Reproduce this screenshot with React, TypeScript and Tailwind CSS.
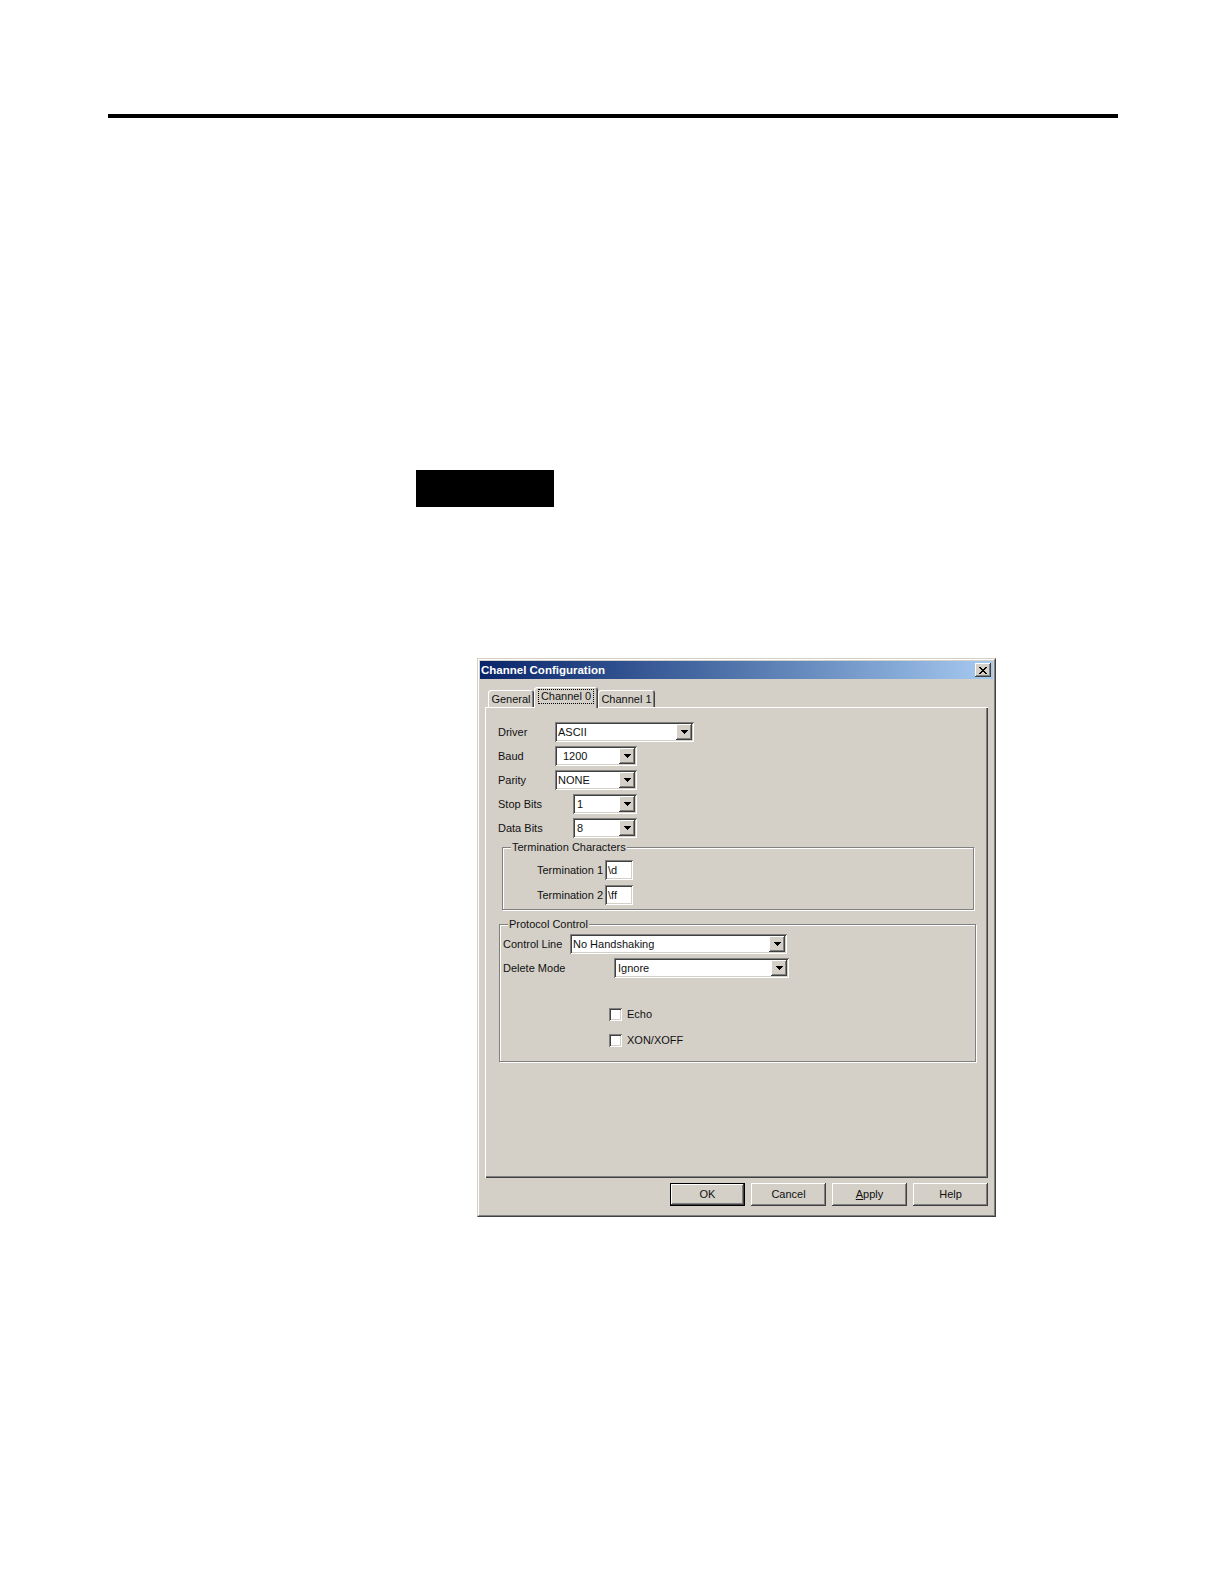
import React from "react";

const raised =
  "shadow-[inset_-1px_-1px_0_#404040,inset_1px_1px_0_#ffffff,inset_-2px_-2px_0_#808080,inset_2px_2px_0_#d4d0c8]";
const sunken =
  "shadow-[inset_1px_1px_0_#808080,inset_-1px_-1px_0_#ffffff,inset_2px_2px_0_#404040,inset_-2px_-2px_0_#d4d0c8]";
const etched = "border border-[#808080] shadow-[inset_1px_1px_0_#ffffff,1px_1px_0_#ffffff]";

function Arrow() {
  return (
    <svg width="7" height="4" viewBox="0 0 7 4" shapeRendering="crispEdges">
      <path d="M0 0h7v1h-1v1h-1v1h-1v1h-1v-1h-1v-1h-1v-1h-1z" fill="#000" />
    </svg>
  );
}

function Combo({ className, text, textClass = "pl-[1px]" }: { className: string; text: string; textClass?: string }) {
  return (
    <div className={`${className} h-[20px] bg-white ${sunken} p-[2px] flex`}>
      <div className={`flex-1 leading-[16px] ${textClass}`}>{text}</div>
      <div className={`w-[16px] h-[16px] bg-[#d4d0c8] ${raised} flex items-center justify-center`}>
        <Arrow />
      </div>
    </div>
  );
}

function Field({ text }: { text: string }) {
  return (
    <div className={`w-[28px] h-[20px] bg-white ${sunken} px-[3px] leading-[20px]`}>{text}</div>
  );
}

function Check({ label }: { label: string }) {
  return (
    <div className="flex items-center h-[13px] ml-[109px]">
      <div className={`w-[13px] h-[13px] bg-white ${sunken}`} />
      <div className="ml-[5px] leading-[13px]">{label}</div>
    </div>
  );
}

function Button({ children, def = false }: { children: React.ReactNode; def?: boolean }) {
  return (
    <div
      className={`w-[75px] h-[23px] bg-[#d4d0c8] flex items-center justify-center ${
        def ? "border border-black" : ""
      }`}
    >
      <div className={`w-full h-full ${raised} flex items-center justify-center leading-[13px]`}>{children}</div>
    </div>
  );
}

export default function App() {
  return (
    <div className="w-[1224px] min-h-[1584px] bg-white pt-[114px] font-['Liberation_Sans',Arial,sans-serif] text-[11px] text-[#111] overflow-hidden">
      <div className="ml-[108px] w-[1010px] h-[4px] bg-black" />
      <div className="ml-[416px] mt-[352px] w-[138px] h-[37px] bg-black" />

      {/* Dialog */}
      <div className="ml-[477px] mt-[151px] w-[519px] h-[559px] bg-[#d4d0c8] border border-t-[#d4d0c8] border-l-[#d4d0c8] border-r-[#404040] border-b-[#404040]">
        <div className="w-full h-full border border-t-white border-l-white border-r-[#808080] border-b-[#808080] p-[1px] flex flex-col">
          {/* Title bar */}
          <div className="h-[18px] bg-linear-to-r from-[#0a246a] to-[#a6caf0] flex items-center justify-between pl-[1px] pr-[2px]">
            <div className="text-white font-bold text-[11.5px] leading-[14px]">Channel Configuration</div>
            <div className={`w-[16px] h-[14px] bg-[#d4d0c8] ${raised} flex items-center justify-center`}>
              <svg width="8" height="7" viewBox="0 0 8 7" shapeRendering="crispEdges">
                <path
                  d="M0 0h2v1h1v1h2v-1h1v-1h2v1h-1v1h-1v1h-1v1h1v1h1v1h1v1h-2v-1h-1v-1h-2v1h-1v1h-2v-1h1v-1h1v-1h1v-1h-1v-1h-1v-1h-1z"
                  fill="#000"
                />
              </svg>
            </div>
          </div>

          {/* Body */}
          <div className="pl-[5px] pr-[5px] pt-[8px]">
            {/* Tabs */}
            <div className="flex items-end h-[20px] pl-[3px]">
              <div className="w-[46px] h-[17px] rounded-t-[3px] shadow-[inset_1px_1px_0_#ffffff,inset_-1px_0_0_#404040,inset_-2px_0_0_#808080] flex items-center justify-center leading-[13px] pt-[1px]">
                General
              </div>
              <div className="relative z-10 w-[64px] h-[21px] mb-[-1px] bg-[#d4d0c8] rounded-t-[3px] shadow-[inset_1px_1px_0_#ffffff,inset_-1px_0_0_#404040,inset_-2px_0_0_#808080] flex items-start justify-center pt-[2px]">
                <span className="border border-dotted border-black px-[2px] leading-[13px]">Channel 0</span>
              </div>
              <div className="w-[57px] h-[17px] rounded-t-[3px] shadow-[inset_1px_1px_0_#ffffff,inset_-1px_0_0_#404040,inset_-2px_0_0_#808080] flex items-center justify-center leading-[13px] pt-[1px]">
                Channel 1
              </div>
            </div>

            {/* Panel */}
            <div className="h-[471px] shadow-[inset_1px_1px_0_#ffffff,inset_-1px_-1px_0_#404040,inset_-2px_-2px_0_#808080] pt-[15px]">
              <div className="pl-[13px] flex flex-col gap-[4px]">
                <div className="flex items-center h-[20px]">
                  <div className="w-[57px]">Driver</div>
                  <Combo className="w-[139px]" text="ASCII" />
                </div>
                <div className="flex items-center h-[20px]">
                  <div className="w-[57px]">Baud</div>
                  <Combo className="w-[82px]" text="1200" textClass="pl-[6px]" />
                </div>
                <div className="flex items-center h-[20px]">
                  <div className="w-[57px]">Parity</div>
                  <Combo className="w-[82px]" text="NONE" />
                </div>
                <div className="flex items-center h-[20px]">
                  <div className="w-[75px]">Stop Bits</div>
                  <Combo className="w-[64px]" text="1" textClass="pl-[2px]" />
                </div>
                <div className="flex items-center h-[20px]">
                  <div className="w-[75px]">Data Bits</div>
                  <Combo className="w-[64px]" text="8" textClass="pl-[2px]" />
                </div>
              </div>

              {/* Termination Characters */}
              <div className={`ml-[17px] mt-[9px] w-[472px] ${etched} pb-[4px]`}>
                <div className="-mt-[7px] ml-[8px] px-[1px] w-fit bg-[#d4d0c8] leading-[13px]">Termination Characters</div>
                <div className="mt-[6px] ml-[34px] flex flex-col gap-[5px]">
                  <div className="flex items-center h-[20px]">
                    <div className="w-[68px]">Termination 1</div>
                    <Field text="\d" />
                  </div>
                  <div className="flex items-center h-[20px]">
                    <div className="w-[68px]">Termination 2</div>
                    <Field text="\ff" />
                  </div>
                </div>
              </div>

              {/* Protocol Control */}
              <div className={`ml-[14px] mt-[14px] w-[477px] ${etched} pb-[14px]`}>
                <div className="-mt-[7px] ml-[8px] px-[1px] w-fit bg-[#d4d0c8] leading-[13px]">Protocol Control</div>
                <div className="mt-[3px] pl-[3px] flex items-center h-[20px]">
                  <div className="w-[67px]">Control Line</div>
                  <Combo className="w-[217px]" text="No Handshaking" />
                </div>
                <div className="mt-[4px] pl-[3px] flex items-center h-[20px]">
                  <div className="w-[111px]">Delete Mode</div>
                  <Combo className="w-[175px]" text="Ignore" textClass="pl-[2px]" />
                </div>
                <div className="mt-[30px]">
                  <Check label="Echo" />
                </div>
                <div className="mt-[13px]">
                  <Check label="XON/XOFF" />
                </div>
              </div>
            </div>

            {/* Buttons */}
            <div className="mt-[5px] flex justify-end gap-[6px]">
              <Button def>OK</Button>
              <Button>Cancel</Button>
              <Button>
                <span>
                  <span className="underline">A</span>pply
                </span>
              </Button>
              <Button>Help</Button>
            </div>
          </div>
        </div>
      </div>
    </div>
  );
}
